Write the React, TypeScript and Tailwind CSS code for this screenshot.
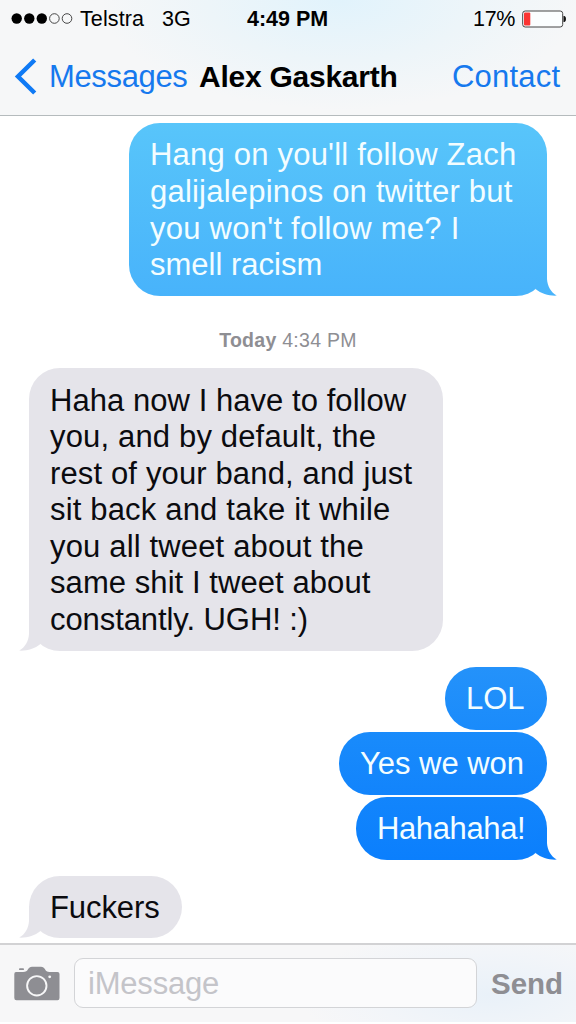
import React from "react";

type Side = "in" | "out";

interface Line {
  text: string;
  tracking: string;
}

interface TailColors {
  id: string;
  from: string;
  to: string;
}

interface BubbleProps {
  side: Side;
  lines: Line[];
  box: string;
  fill: string;
  tail?: TailColors;
}

function Tail({ side, colors }: { side: Side; colors: TailColors }) {
  return (
    <svg
      className={
        side === "out"
          ? "absolute -right-[11px] bottom-0"
          : "absolute -left-[11px] bottom-0 -scale-x-100"
      }
      width="36"
      height="36"
      viewBox="0 0 36 36"
    >
      <defs>
        <linearGradient id={colors.id} gradientUnits="userSpaceOnUse" x1="0" y1="0" x2="0" y2="36">
          <stop offset="0" stopColor={colors.from} />
          <stop offset="1" stopColor={colors.to} />
        </linearGradient>
      </defs>
      <path
        d="M16 4H25V19C25.300 26 29 32.500 34.800 35.600C27 36 19.500 33.800 13.500 29Z"
        fill={`url(#${colors.id})`}
      />
    </svg>
  );
}

function Bubble({ side, lines, box, fill, tail }: BubbleProps) {
  return (
    <div
      className={`relative flex flex-col justify-center pl-[21px] pt-[2px] rounded-[31px] ${box} ${fill} ${
        side === "out" ? "self-end mr-[29px] text-[#f3fdff]" : "self-start ml-[29px] text-[#0b0b0f]"
      }`}
    >
      {tail && <Tail side={side} colors={tail} />}
      {lines.map((l) => (
        <div
          key={l.text}
          className={`relative whitespace-nowrap text-[31px] leading-[36.55px] ${l.tracking}`}
        >
          {l.text}
        </div>
      ))}
    </div>
  );
}

function StatusBar() {
  return (
    <div className="grid h-[38px] grid-cols-[247px_1fr_103px] items-center text-[21.5px] leading-none text-black">
      <div className="flex items-center pl-[11px]">
        <svg width="62" height="12" viewBox="0 0 62 12">
          <circle cx="5.7" cy="5.500" r="5.2" />
          <circle cx="18.3" cy="5.500" r="5.2" />
          <circle cx="30.8" cy="5.500" r="5.2" />
          <circle cx="43.4" cy="5.500" r="4.8" fill="none" stroke="#333" strokeWidth="0.9" />
          <circle cx="56" cy="5.500" r="4.8" fill="none" stroke="#333" strokeWidth="0.9" />
        </svg>
        <span className="ml-[7px] w-[82px] pt-[2px] tracking-[0.1px]">Telstra</span>
        <span className="pt-[2px]">3G</span>
      </div>
      <span className="pt-[2px] font-bold">4:49 PM</span>
      <div className="flex items-center">
        <span className="w-[49px] pt-[2px] tracking-[-0.3px]">17%</span>
        <svg width="45" height="18" viewBox="0 0 45 18">
          <rect x="0.7" y="1" width="40" height="16" rx="2.5" fill="#fbfeff" stroke="#444" strokeWidth="1" />
          <rect x="2" y="2.5" width="6.3" height="13" rx="1" fill="#fb3432" />
          <path d="M41.5 6H42.5Q44 6.5 44 9Q44 11.500 42.5 12H41.500Z" fill="#111" />
        </svg>
      </div>
    </div>
  );
}

function NavBar() {
  return (
    <div className="flex h-[77px] items-center leading-none">
      <svg className="ml-[14px]" width="23" height="37" viewBox="0 0 23 37">
        <path d="M20.700 2L4 18.500L20.700 35" fill="none" stroke="#0f7af5" strokeWidth="4.500" />
      </svg>
      <span className="ml-[12px] w-[150px] text-[31px] tracking-[-0.35px] text-[#1679ee]">Messages</span>
      <span className="w-[253px] whitespace-nowrap text-[30px] font-bold tracking-[-0.25px] text-black">
        Alex Gaskarth
      </span>
      <span className="text-[31px] tracking-[0.2px] text-[#1679ee]">Contact</span>
    </div>
  );
}

function CameraIcon() {
  return (
    <svg width="46" height="35" viewBox="0 0 46 35">
      <rect x="5" y="2.300" width="5" height="1.800" rx="0.900" fill="#8e8e93" />
      <path
        d="M2 6H9C12 6 13 5 14 3.300C15 1.500 16 0.700 18 0.700H27C29 0.700 30 1.500 31 3.300C32 5 33 6 35.500 6H43.500Q45.500 6 45.500 8V32Q45.500 34.200 43.500 34.200H2.500Q0.300 34.200 0.300 32V8Q0.300 6 2 6Z"
        fill="#8e8e93"
      />
      <circle cx="22.800" cy="19.800" r="9.700" fill="none" stroke="#f7f7f8" strokeWidth="1.900" />
      <circle cx="35.700" cy="10.800" r="1.400" fill="#f7f7f8" />
    </svg>
  );
}

export default function App() {
  return (
    <div className="flex h-[1024px] w-[576px] flex-col overflow-hidden bg-white font-['Liberation_Sans',Arial,sans-serif]">
      <header className="h-[116px] shrink-0 border-b border-[#b5bbbd] bg-[#f6f7f8] bg-[radial-gradient(ellipse_240px_110px_at_340px_0px,#e1f3fc_0%,#edf5f9_55%,#f6f7f8_100%)]">
        <StatusBar />
        <NavBar />
      </header>

      <main className="flex min-h-0 flex-1 flex-col pt-[7px]">
        <Bubble
          side="out"
          box="h-[173px] w-[418px]"
          fill="bg-linear-to-b from-[#58c5fa] to-[#48b3fb]"
          tail={{ id: "tail-light", from: "#4bb7fb", to: "#48b3fb" }}
          lines={[
            { text: "Hang on you'll follow Zach", tracking: "tracking-[0.21px]" },
            { text: "galijalepinos on twitter but", tracking: "tracking-[0.21px]" },
            { text: "you won't follow me? I", tracking: "tracking-[0.25px]" },
            { text: "smell racism", tracking: "tracking-[0px]" },
          ]}
        />
        <div className="mt-[32px] flex h-[26px] items-center justify-center text-[19.5px] tracking-[0.28px] text-[#8e8e93]">
          <span className="whitespace-pre font-bold">Today </span>
          <span>4:34 PM</span>
        </div>
        <Bubble
          side="in"
          box="mt-[14px] h-[283px] w-[414px]"
          fill="bg-[#e5e4ea]"
          tail={{ id: "tail-gray-long", from: "#e5e4ea", to: "#e5e4ea" }}
          lines={[
            { text: "Haha now I have to follow", tracking: "tracking-[0.05px]" },
            { text: "you, and by default, the", tracking: "tracking-[0.16px]" },
            { text: "rest of your band, and just", tracking: "tracking-[0.14px]" },
            { text: "sit back and take it while", tracking: "tracking-[0.17px]" },
            { text: "you all tweet about the", tracking: "tracking-[0.16px]" },
            { text: "same shit I tweet about", tracking: "tracking-[0.07px]" },
            { text: "constantly. UGH! :)", tracking: "tracking-[-0.08px]" },
          ]}
        />
        <Bubble
          side="out"
          box="mt-4 h-[63px] w-[102px]"
          fill="bg-linear-to-b from-[#2492fa] to-[#1a8bfb]"
          lines={[{ text: "LOL", tracking: "tracking-[0px]" }]}
        />
        <Bubble
          side="out"
          box="mt-[2px] h-[63px] w-[208px]"
          fill="bg-linear-to-b from-[#198bfb] to-[#1284fc]"
          lines={[{ text: "Yes we won", tracking: "tracking-[-0.03px]" }]}
        />
        <Bubble
          side="out"
          box="mt-[2px] h-[63px] w-[191px]"
          fill="bg-linear-to-b from-[#1285fc] to-[#0b7ffd]"
          tail={{ id: "tail-deep", from: "#0f82fc", to: "#0b7ffd" }}
          lines={[{ text: "Hahahaha!", tracking: "tracking-[-0.38px]" }]}
        />
        <Bubble
          side="in"
          box="mt-4 h-[62px] w-[153px]"
          fill="bg-[#e5e4ea]"
          tail={{ id: "tail-gray-short", from: "#e5e4ea", to: "#e5e4ea" }}
          lines={[{ text: "Fuckers", tracking: "tracking-[-0.1px]" }]}
        />
      </main>

      <footer className="mb-[2px] flex h-[79px] shrink-0 items-center border-t-2 border-[#d2d2d4] bg-[#f7f7f8] bg-[radial-gradient(ellipse_190px_70px_at_490px_50px,#e9f1f9_0%,#f2f5f9_60%,#f7f7f8_100%)] pl-[14px]">
        <CameraIcon />
        <div className="ml-[14px] flex h-[50px] w-[403px] -translate-y-px items-center rounded-[9px] border-[1.5px] border-[#d3d4d7] bg-[#fbfbfc] pl-[13px] pt-[2px] text-[31px] leading-none tracking-[-0.2px] text-[#c4c4c9]">
          iMessage
        </div>
        <span className="ml-[14px] text-[29.5px] font-bold leading-none text-[#8e8e93]">Send</span>
      </footer>
    </div>
  );
}
